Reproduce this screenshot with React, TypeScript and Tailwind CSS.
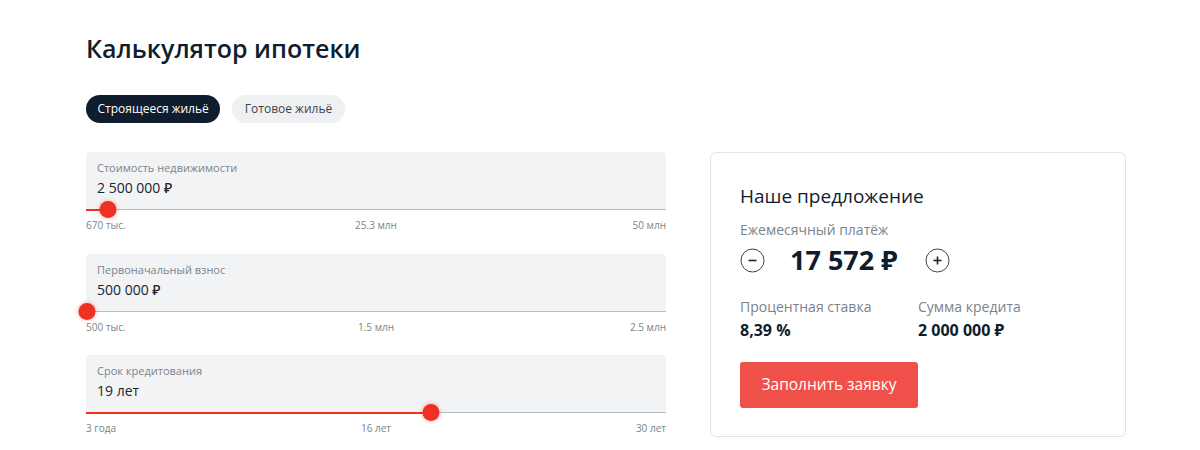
import React from "react";

type SliderProps = {
  label: string;
  value: string;
  pct: number;
  min: string;
  mid: string;
  max: string;
  mb: string;
};

function SliderField({ label, value, pct, min, mid, max, mb }: SliderProps) {
  return (
    <div className={mb}>
      <div className="relative h-[58px] rounded-t-[4px] bg-[#f2f3f5] px-[11px] pt-[9px]">
        <div className="text-[11px] leading-[14px] text-[#7a838d]">{label}</div>
        <div className="mt-[3px] text-[14px] leading-[20px] font-medium text-[#1b2430]">{value}</div>
        <div className="absolute left-0 right-0 bottom-0 h-[1px] bg-[#b7bcc2]" />
        <div
          className="absolute left-0 bottom-[-0.5px] h-[2px] bg-[#ef3124]"
          style={{ width: `${pct}%` }}
        />
        <div
          className="absolute bottom-[-8px] h-[17px] w-[17px] -translate-x-1/2 rounded-full bg-[#ef3124] shadow-[0_0_4px_rgba(239,49,36,0.45)]"
          style={{ left: `${pct}%` }}
        />
      </div>
      <div className="mt-[8px] grid grid-cols-3 text-[10px] leading-[14px] text-[#7a838d]">
        <span className="text-left">{min}</span>
        <span className="text-center">{mid}</span>
        <span className="text-right">{max}</span>
      </div>
    </div>
  );
}

function CircleBtn({ kind }: { kind: "minus" | "plus" }) {
  return (
    <svg width="25" height="25" viewBox="0 0 25 25" fill="none">
      <circle cx="12.5" cy="12.5" r="11.5" stroke="#3a4350" strokeWidth="1" />
      <line x1="8.5" y1="12.5" x2="16.5" y2="12.5" stroke="#1b2430" strokeWidth="1.6" />
      {kind === "plus" && (
        <line x1="12.5" y1="8.5" x2="12.5" y2="16.5" stroke="#1b2430" strokeWidth="1.6" />
      )}
    </svg>
  );
}

export default function App() {
  return (
    <div
      className="min-h-[450px] w-[1200px] bg-white pl-[86px] pt-[30px] text-[#0f1d2e]"
      style={{ fontFamily: '"Open Sans", "Noto Sans", sans-serif' }}
    >
      <h1 className="text-[25px] leading-[36px] font-semibold text-[#0f1d2e]">Калькулятор ипотеки</h1>
      <div className="mt-[29px] flex gap-[12px]">
        <button className="h-[28px] rounded-full bg-[#0f1d2e] px-[11.5px] text-[12px] text-white">
          Строящееся жильё
        </button>
        <button className="h-[28px] rounded-full bg-[#eff0f1] px-[12.5px] text-[12px] text-[#3a4350]">
          Готовое жильё
        </button>
      </div>
      <div className="mt-[29px] flex items-start gap-[44px]">
        <div className="w-[580px]">
          <SliderField
            label="Стоимость недвижимости"
            value="2 500 000 ₽"
            pct={3.8}
            min="670 тыс."
            mid="25.3 млн"
            max="50 млн"
            mb="mb-[22px]"
          />
          <SliderField
            label="Первоначальный взнос"
            value="500 000 ₽"
            pct={0.2}
            min="500 тыс."
            mid="1.5 млн"
            max="2.5 млн"
            mb="mb-[21px]"
          />
          <SliderField
            label="Срок кредитования"
            value="19 лет"
            pct={59.5}
            min="3 года"
            mid="16 лет"
            max="30 лет"
            mb="mb-[21px]"
          />
        </div>
        <div className="w-[416px] rounded-[6px] border border-[#e1e3e6] px-[29px] pt-[29px] pb-[28px]">
          <div className="text-[19px] leading-[28px] font-medium text-[#0f1d2e]">Наше предложение</div>
          <div className="mt-[10px] text-[14px] leading-[19px] text-[#7a838d]">Ежемесячный платёж</div>
          <div className="mt-[5px] flex h-[32px] items-center">
            <CircleBtn kind="minus" />
            <div className="ml-[25px] mr-[28px] text-[27px] leading-[32px] font-bold text-[#0f1d2e]">17 572 ₽</div>
            <CircleBtn kind="plus" />
          </div>
          <div className="mt-[21px] flex">
            <div className="w-[178px]">
              <div className="text-[14px] leading-[19px] text-[#7a838d]">Процентная ставка</div>
              <div className="mt-[3px] text-[16px] leading-[22px] font-bold text-[#0f1d2e]">8,39 %</div>
            </div>
            <div>
              <div className="text-[14px] leading-[19px] text-[#7a838d]">Сумма кредита</div>
              <div className="mt-[3px] text-[16px] leading-[22px] font-bold text-[#0f1d2e]">2 000 000 ₽</div>
            </div>
          </div>
          <button className="mt-[21px] h-[46px] w-[178px] rounded-[3px] bg-[#f0504a] text-[15.5px] text-white">
            Заполнить заявку
          </button>
        </div>
      </div>
    </div>
  );
}
